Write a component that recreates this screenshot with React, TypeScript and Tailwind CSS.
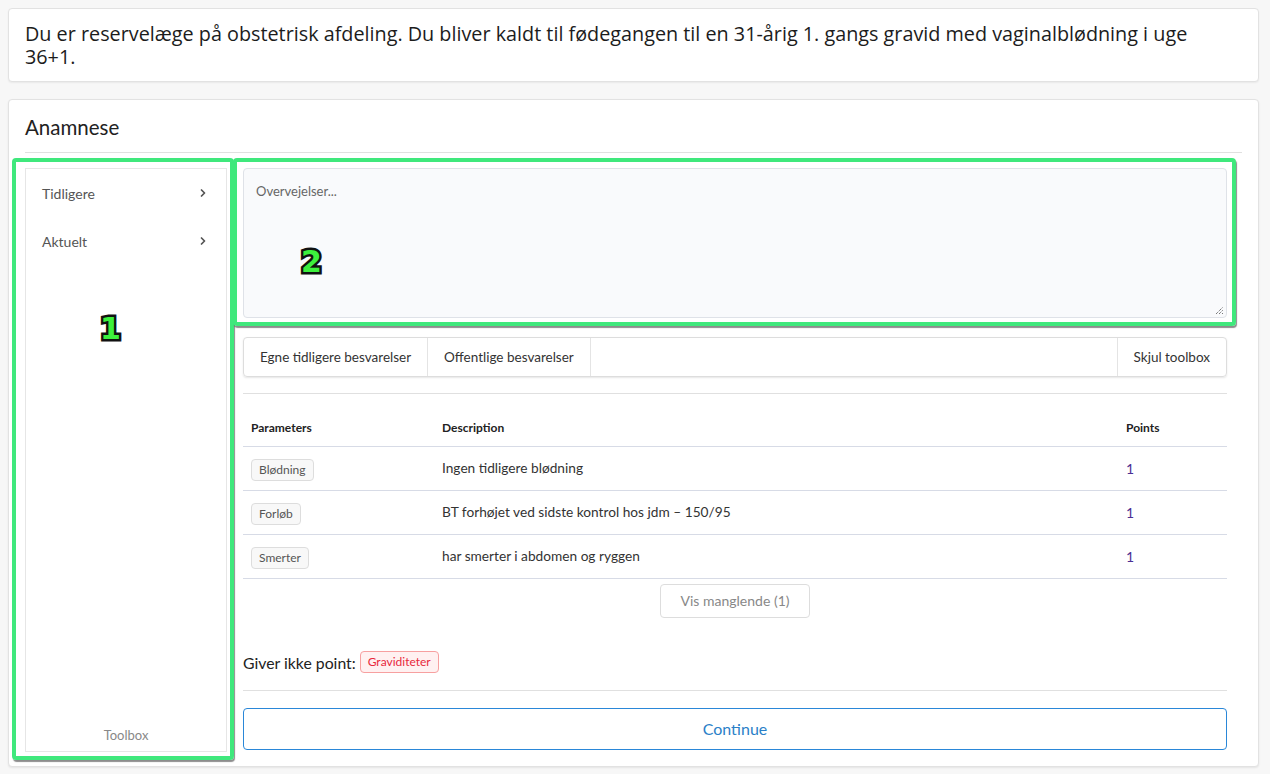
import { ChevronRight } from "lucide-react";

const rows = [
  { tag: "Blødning", text: "Ingen tidligere blødning", points: 1 },
  { tag: "Forløb", text: "BT forhøjet ved sidste kontrol hos jdm – 150/95", points: 1 },
  { tag: "Smerter", text: "har smerter i abdomen og ryggen", points: 1 },
];

function Marker({ n }: { n: string }) {
  return (
    <span className="font-['DejaVu_Sans'] text-[30px] font-bold leading-none text-[#3df03d] [-webkit-text-stroke:5px_#111] [paint-order:stroke_fill]">
      {n}
    </span>
  );
}

export default function App() {
  return (
    <div className="min-h-screen bg-[#f7f7f7] py-2 pl-2 pr-[11px] font-['Lato',sans-serif] text-[#222]">
      {/* Case intro */}
      <div className="rounded border border-[#e2e2e2] bg-white px-[16px] py-[13px] shadow-[0_1px_2px_rgba(0,0,0,0.06)]">
        <p className="font-['Open_Sans',sans-serif] text-[19.8px] leading-[23px] text-[#1c1c1c]">
          Du er reservelæge på obstetrisk afdeling. Du bliver kaldt til fødegangen til en 31-årig 1. gangs gravid med vaginalblødning i uge
          <br />
          36+1.
        </p>
      </div>

      {/* Anamnese card */}
      <div className="mt-[17px] rounded border border-[#e2e2e2] bg-white px-[16px] pb-[14px] pt-[15px] shadow-[0_1px_2px_rgba(0,0,0,0.08)]">
        <h2 className="text-[20.5px] leading-6 text-[#222]">Anamnese</h2>
        <div className="mt-[13px] border-t border-[#e0e0e0]" />

        <div className="relative mt-[15px] flex gap-4">
          {/* Toolbox */}
          <div className="flex w-[202px] shrink-0 flex-col border border-[#e6e6e6]">
            <div className="flex flex-col">
              {["Tidligere", "Aktuelt"].map((item) => (
                <div key={item} className="flex h-12 items-center justify-between pl-4 pr-[17px] text-[14px] text-[#555]">
                  <span>{item}</span>
                  <ChevronRight className="h-3 w-3 text-[#555]" strokeWidth={3.5} />
                </div>
              ))}
            </div>
            <div className="mt-auto pb-[6px] text-center text-[13px] text-[#888]">Toolbox</div>
          </div>

          {/* Main column */}
          <div className="flex flex-1 flex-col pb-[2px] pr-[15px]">
            <div className="relative h-[150px] rounded-sm border border-[#dfe2e8] bg-[#f9fafc] px-3 pb-[15px] pt-[13px] text-[13px] text-[#666]">
              Overvejelser...
              <svg className="absolute bottom-[2px] right-[2px]" width="9" height="9" viewBox="0 0 9 9">
                <path d="M1 8L8 1M4 8L8 4M7 8L8 7" stroke="#444" strokeWidth="1" strokeDasharray="1 1" />
              </svg>
            </div>

            <div className="mt-[19px] flex h-10 rounded border border-[#ddd] text-[13.5px] text-[#333] shadow-[0_1px_2px_rgba(0,0,0,0.1)]">
              <button className="border-r border-[#e4e4e4] px-4">Egne tidligere besvarelser</button>
              <button className="border-r border-[#e4e4e4] px-4">Offentlige besvarelser</button>
              <div className="flex-1" />
              <button className="border-l border-[#e4e4e4] px-4">Skjul toolbox</button>
            </div>

            <div className="mt-[16px] border-t border-[#e0e0e0]" />

            <table className="mt-[16px] w-full border-collapse text-left">
              <thead>
                <tr className="h-9 border-b border-[#d7dbe6] text-[12px] font-bold text-[#222]">
                  <th className="w-[199px] pl-2">Parameters</th>
                  <th className="pl-0">Description</th>
                  <th className="w-[109px] pl-2">Points</th>
                </tr>
              </thead>
              <tbody>
                {rows.map((r) => (
                  <tr key={r.tag} className="h-11 border-b border-[#d7dbe6]">
                    <td className="pl-2">
                      <span className="inline-block rounded border border-[#ddd] bg-[#f8f8f8] px-[7px] py-[2px] text-[12px] leading-4 text-[#555]">
                        {r.tag}
                      </span>
                    </td>
                    <td className="text-[13.7px] text-[#333]">{r.text}</td>
                    <td className="pl-2 text-[14px] text-[#4b2f94]">{r.points}</td>
                  </tr>
                ))}
              </tbody>
            </table>

            <div className="mt-[5px] flex justify-center">
              <button className="h-[34px] rounded border border-[#ddd] px-5 text-[14px] text-[#888]">Vis manglende (1)</button>
            </div>

            <div className="mt-[33px] flex items-center gap-[4px] text-[15.8px] text-[#222]">
              <span>Giver ikke point:</span>
              <span className="rounded border border-[#f7a0a0] bg-[#fff1f1] px-[7px] py-[2px] text-[12px] leading-4 text-[#e8283c]">
                Graviditeter
              </span>
            </div>

            <div className="mt-[16px] border-t border-[#e0e0e0]" />

            <button className="mt-[17px] h-[42px] rounded border border-[#2a87d8] text-[16px] text-[#2a7fc8]">Continue</button>
          </div>

          {/* annotation overlays */}
          <div className="pointer-events-none absolute left-[-13px] top-[-10px] h-[602px] w-[222px] rounded border-4 border-[#3fe87c] shadow-[1px_2px_1px_rgba(0,0,0,0.45)]" />
          <div className="pointer-events-none absolute left-[208px] top-[-10px] h-[168px] w-[1003px] rounded border-4 border-[#3fe87c] shadow-[1px_2px_1px_rgba(0,0,0,0.45)]" />
          <div className="pointer-events-none absolute left-[75px] top-[146px]">
            <Marker n="1" />
          </div>
          <div className="pointer-events-none absolute left-[276px] top-[79px]">
            <Marker n="2" />
          </div>
        </div>
      </div>
    </div>
  );
}
